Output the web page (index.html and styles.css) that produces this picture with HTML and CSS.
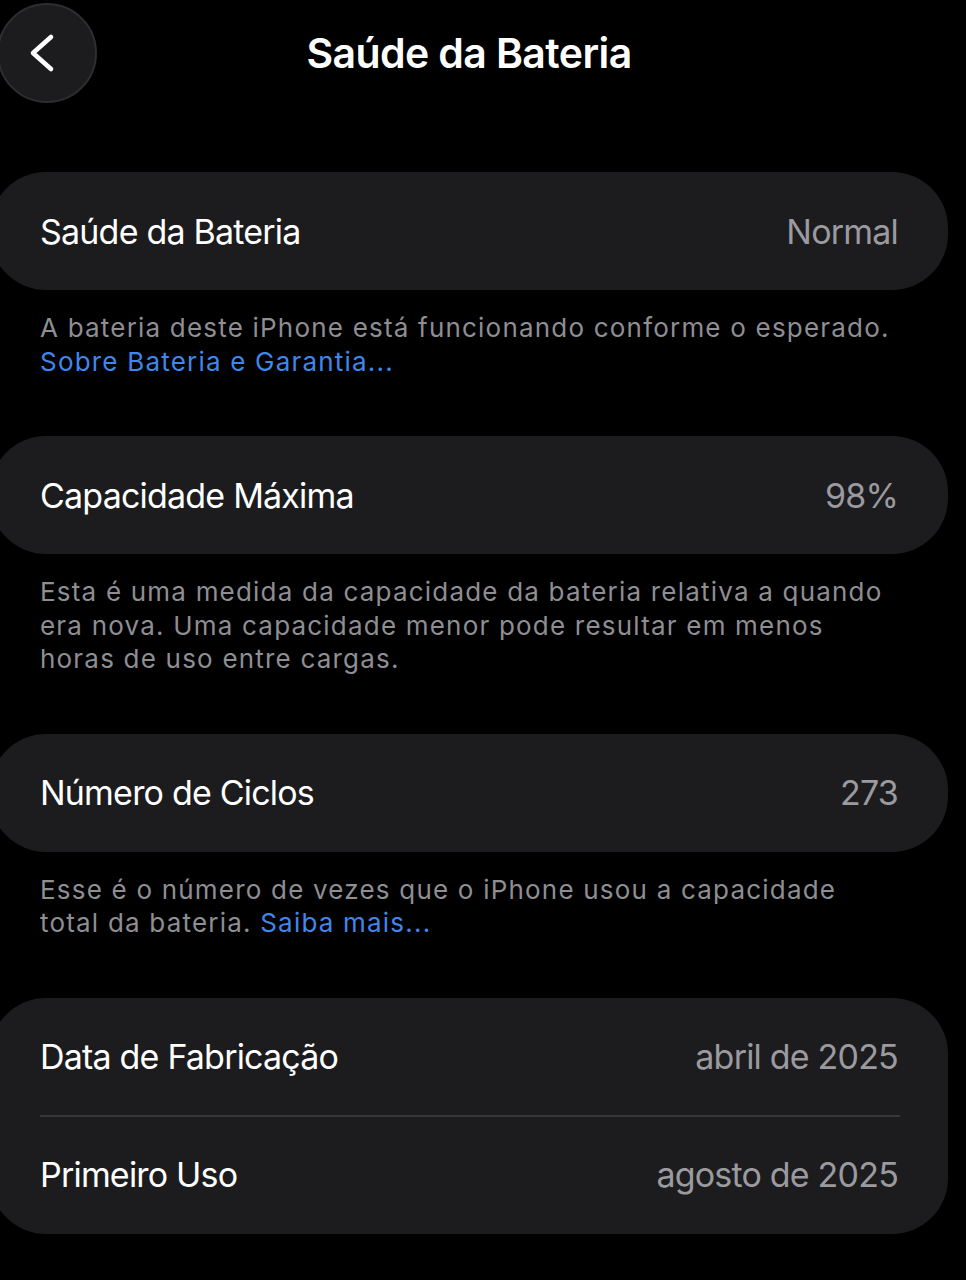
FILE: index.html
```html
<!DOCTYPE html>
<html lang="pt-BR">
<head>
    <meta charset="UTF-8">
    <meta name="viewport" content="width=device-width, initial-scale=1.0">
    <title>Saúde da Bateria</title>
    <link rel="stylesheet" href="styles.css">
</head>
<body>

<div class="screen">
    <div class="header">
        <button class="back-button" aria-label="Voltar">
            <svg width="40" height="50" viewBox="0 0 40 50">
                <path d="M27 9 L9 25 L27 41" fill="none" stroke="#fff" stroke-width="4.6" stroke-linecap="round" stroke-linejoin="round"/>
            </svg>
        </button>
        <h1 class="title">Saúde da Bateria</h1>
        <div></div>
    </div>

    <div class="group">
        <div class="row">
            <span class="label">Saúde da Bateria</span>
            <span class="value">Normal</span>
        </div>
    </div>
    <p class="footer">A bateria deste iPhone está funcionando conforme o esperado. <a href="#">Sobre Bateria e Garantia...</a></p>

    <div class="group">
        <div class="row">
            <span class="label">Capacidade Máxima</span>
            <span class="value">98%</span>
        </div>
    </div>
    <p class="footer">Esta é uma medida da capacidade da bateria relativa a quando era nova. Uma capacidade menor pode resultar em menos horas de uso entre cargas.</p>

    <div class="group">
        <div class="row">
            <span class="label">Número de Ciclos</span>
            <span class="value">273</span>
        </div>
    </div>
    <p class="footer">Esse é o número de vezes que o iPhone usou a capacidade total da bateria. <a href="#">Saiba mais...</a></p>

    <div class="group">
        <div class="row">
            <span class="label">Data de Fabricação</span>
            <span class="value">abril de 2025</span>
        </div>
        <div class="separator"></div>
        <div class="row">
            <span class="label">Primeiro Uso</span>
            <span class="value">agosto de 2025</span>
        </div>
    </div>
</div>

</body>
</html>
```

FILE: styles.css
```css
body {
    margin: 0;
    background-color: #000;
    font-family: Inter, "Noto Sans", sans-serif;
    color: #fff;
}

.screen {
    width: 958px;
    margin-left: -10px; /* la vista viene recortada por la izquierda */
}

.header {
    display: grid;
    grid-template-columns: 100px 1fr 100px;
    align-items: center;
    padding: 3px 7px 0;
}

.back-button {
    width: 100px;
    height: 100px;
    border-radius: 50%;
    background-color: #1c1c1e;
    border: 2px solid #2e2e31;
    display: flex;
    align-items: center;
    justify-content: center;
    padding: 0;
    cursor: pointer;
}

.back-button svg {
    margin-right: 6px;
}

.title {
    margin: 0;
    text-align: center;
    font-size: 41px;
    font-weight: 600;
    letter-spacing: -0.6px;
}

.group {
    background-color: #1c1c1e;
    border-radius: 56px;
    margin-top: 69px;
}

.row {
    height: 118px;
    display: flex;
    align-items: center;
    justify-content: space-between;
    padding: 0 50px;
    font-size: 34px;
    letter-spacing: -0.8px;
}

.label {
    color: #fff;
}

.value {
    color: #9a9a9f;
}

.separator {
    height: 2px;
    background-color: #38383b;
    margin: -1px 48px -1px 50px;
}

.footer {
    margin: 0;
    padding: 21px 50px 0;
    font-size: 26px;
    line-height: 33.5px;
    color: #8e8e93;
    letter-spacing: 1.2px;
}

.footer + .group {
    margin-top: 58px;
}

.footer a {
    color: #3f87ec;
    text-decoration: none;
}
```
